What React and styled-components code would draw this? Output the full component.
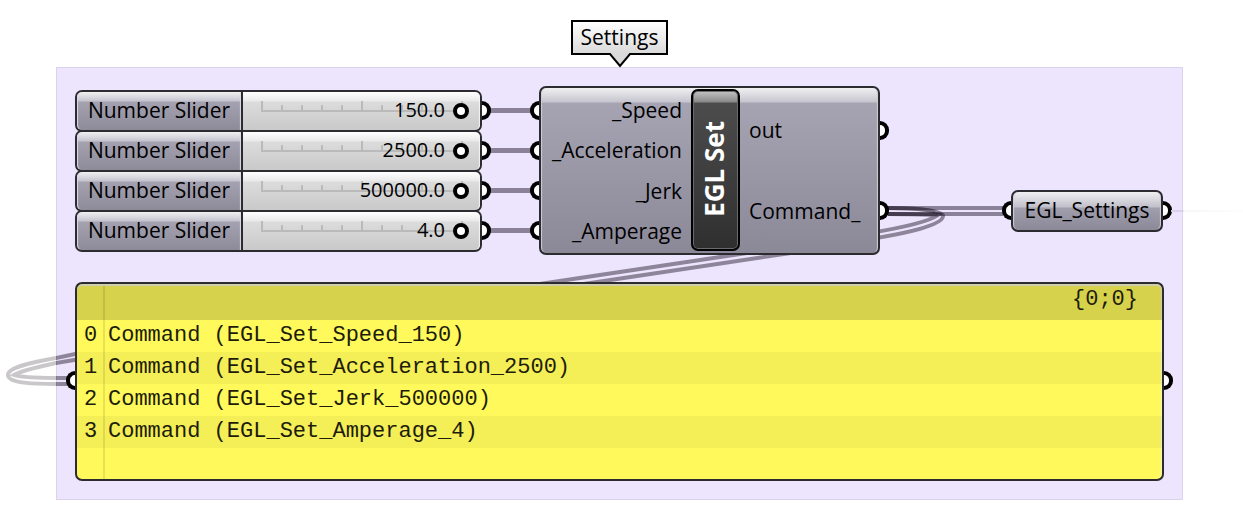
import React from "react";
import styled, { createGlobalStyle } from "styled-components";

const GlobalStyle = createGlobalStyle`
  * { box-sizing: border-box; }
  body {
    margin: 0;
    background: #ffffff;
    color: #000000;
    font-family: "Open Sans", "Noto Sans", sans-serif;
    font-size: 21px;
    line-height: 28px;
  }
`;

const Canvas = styled.main`
  display: flex;
  flex-direction: column;
  min-width: 1060px;
  padding: 20px 60px 20px 56px;
  overflow: hidden;
`;

const Tag = styled.h1`
  position: relative;
  z-index: 2;
  align-self: center;
  height: 35px;
  margin: 0 0 12px;
  padding: 1px 8px;
  border: 2px solid #000000;
  background: linear-gradient(#ffffff, #dadada);
  font-size: 21px;
  font-weight: 400;
  line-height: 28px;
`;

const Pointer = styled.svg`
  position: absolute;
  top: 31px;
  left: 50%;
  width: 22px;
  height: 15px;
  margin-left: -11px;
`;

const Group = styled.section`
  position: relative;
  display: flex;
  flex-direction: column;
  gap: 27px;
  padding: 18px;
  border: 1px solid #dad3ee;
  background: #ede5fe;
`;

const LoopWires = styled.svg`
  position: absolute;
  top: -1px;
  left: -57px;
  width: 1000px;
  height: 434px;
  pointer-events: none;
`;

const Flow = styled.div`
  display: flex;
  align-items: center;
`;

const Sliders = styled.div`
  flex: none;
  display: flex;
  flex-direction: column;
  width: 407px;
`;

const SliderRow = styled.div`
  position: relative;
  display: flex;
  height: 42px;
  margin-bottom: -2px;
  border: 2px solid #2c2b2f;
  border-radius: 7px;
  background: #2c2b2f;
  &:last-child { margin-bottom: 0; }
`;

const SliderLabel = styled.label`
  display: flex;
  align-items: center;
  justify-content: center;
  width: 164px;
  margin-right: 2px;
  padding-bottom: 2px;
  border-radius: 5px 0 0 5px;
  background: linear-gradient(#f0f0f2 0, #c5c4cf 9px, #a4a2b1 10px, #8d8b99 100%);
  box-shadow: inset 2px 0 1px -1px #dddce4, inset -2px 0 1px -1px #dddce4;
`;

const SliderBody = styled.div`
  flex: 1;
  display: grid;
  align-items: center;
  padding: 0 11px;
  border-radius: 0 5px 5px 0;
  background: linear-gradient(#ffffff 0, #e9e9e9 9px, #dcdcdc 10px, #c9c9c9 100%);
  box-shadow: inset -2px 0 1px -1px #f4f4f4;
`;

const Range = styled.input`
  grid-area: 1 / 1;
  appearance: none;
  width: 100%;
  height: 20px;
  margin: 0;
  background:
    linear-gradient(#bababa, #bababa) 7px 9px / 202px 2px no-repeat,
    repeating-linear-gradient(90deg, #bababa 0 2px, transparent 2px 100px) 7px 0 / 202px 10px no-repeat,
    repeating-linear-gradient(90deg, #bababa 0 2px, transparent 2px 20px) 7px 4px / 202px 6px no-repeat;
  &::-webkit-slider-thumb {
    appearance: none;
    width: 16px;
    height: 16px;
    border: 4px solid #000000;
    border-radius: 50%;
    background: #ffffff;
  }
`;

const Value = styled.output`
  grid-area: 1 / 1;
  z-index: 1;
  justify-self: end;
  padding: 0 24px 2px 0;
  font-size: 20px;
  pointer-events: none;
`;

const Port = styled.span`
  position: absolute;
  top: ${(p) => p.$y}px;
  ${(p) => (p.$side === "in" ? "right: 100%;" : "left: 100%;")}
  width: 9px;
  height: 19px;
  margin: 0 2px;
  border: solid #000000;
  border-width: ${(p) => (p.$side === "in" ? "4px 0 4px 4px" : "4px 4px 4px 0")};
  border-radius: ${(p) => (p.$side === "in" ? "10px 0 0 10px" : "0 10px 10px 0")};
  background: #ffffff;
`;

const ShortWires = styled.div`
  flex: none;
  display: flex;
  flex-direction: column;
  gap: 35px;
  width: 57px;
  padding: 0 8px;
`;

const Wire = styled.span`
  height: 5px;
  background: #8b8299;
`;

const Component = styled.article`
  position: relative;
  z-index: 1;
  flex: none;
  display: grid;
  grid-template-columns: 141px 49px 1fr;
  column-gap: 9px;
  width: 341px;
  height: 169px;
  border: 2px solid #2c2b2f;
  border-radius: 7px;
  background: linear-gradient(#f0f0f2 0, #c6c5cf 14px, #a6a4b3 15px, #8b8998 100%);
  box-shadow: inset 2px 0 1px -1px #cfced8, inset -2px 0 1px -1px #cfced8;
`;

const PortNames = styled.ul`
  display: flex;
  flex-direction: column;
  justify-content: space-around;
  margin: 0;
  padding: 2px 0;
  list-style: none;
  text-align: ${(p) => p.$align};
`;

const Core = styled.h2`
  display: flex;
  align-items: center;
  justify-content: center;
  height: 162px;
  margin: 1px 0 0;
  padding: 0 4px 2px 0;
  border: 2px solid #000000;
  border-radius: 7px;
  background: linear-gradient(#c4c4c4 0, #888888 11px, #4c4c4c 12px, #2f2f2f 100%);
  box-shadow: inset 0 0 0 1px #6a6a6a;
  color: #ffffff;
  font-size: 26px;
  line-height: 32px;
`;

const Vertical = styled.span`
  writing-mode: vertical-rl;
  transform: rotate(180deg);
`;

const Link = styled.div`
  flex: 1;
  align-self: flex-end;
  height: 10px;
  margin: 0 8px 39px;
  border: solid #8b8299;
  border-width: 4px 0;
`;

const Param = styled.div`
  position: relative;
  flex: none;
  align-self: flex-end;
  width: 152px;
  height: 42px;
  margin: 0 1px 23px 0;
  padding: 4px 0;
  border: 2px solid #2c2b2f;
  border-radius: 7px;
  background: linear-gradient(#f0f0f2 0, #c0bfca 15px, #a19fae 16px, #8b8998 100%);
  box-shadow: inset 2px 0 1px -1px #cfced8, inset -2px 0 1px -1px #cfced8;
  text-align: center;
`;

const FadingWire = styled.span`
  position: absolute;
  top: 18px;
  left: calc(100% + 10px);
  width: 72px;
  height: 2px;
  background: linear-gradient(90deg, #d9d1eb 12px, #f7f7f7 13px, #fdfdfd);
`;

const Panel = styled.div`
  position: relative;
  height: 199px;
  border: 2px solid #2c2b2f;
  border-radius: 7px;
  background:
    linear-gradient(#00000018, #00000018) 26px 0 / 2px 100% no-repeat,
    #fff95b;
  box-shadow: inset 0 2px 1px #f6f4cf, inset -2px 0 1px -1px #f6f4cf;
`;

const Table = styled.table`
  width: 100%;
  border-collapse: collapse;
  font-family: "Liberation Mono", monospace;
  font-size: 22px;
  line-height: 28px;
  color: #1d1c0a;
`;

const HeadRow = styled.tr`
  height: 36px;
  background: #00000028;
`;

const Path = styled.th`
  padding: 0 24px 4px 0;
  font-weight: 400;
  text-align: right;
`;

const Row = styled.tr`
  height: 32px;
  background: ${(p) => (p.$odd ? "#0000000b" : "transparent")};
`;

const Index = styled.th`
  width: 28px;
  padding: 2px 0 2px 7px;
  font-weight: 400;
  text-align: left;
`;

const Item = styled.td`
  padding: 2px 0 2px 3px;
`;

const sliders = [
  { id: "speed", value: 150, text: "150.0" },
  { id: "acceleration", value: 2500, text: "2500.0" },
  { id: "jerk", value: 500000, text: "500000.0" },
  { id: "amperage", value: 4, text: "4.0" },
];

const commands = [
  "Command (EGL_Set_Speed_150)",
  "Command (EGL_Set_Acceleration_2500)",
  "Command (EGL_Set_Jerk_500000)",
  "Command (EGL_Set_Amperage_4)",
];

function LeftLoop() {
  return (
    <>
      <path d="M80 286 L56 291 C34 295 8 300 8 308 C8 317 36 317 70 317" />
      <path d="M80 292 L56 296 C38 300 20 304 14 308 C22 311 44 311 70 311" />
    </>
  );
}

function Wires() {
  return (
    <LoopWires viewBox="0 0 1000 434" fill="none" stroke="#0c0010" strokeWidth="4" aria-hidden="true">
      <defs>
        <clipPath id="inside"><rect x="56" y="0" width="944" height="434" /></clipPath>
        <clipPath id="outside"><rect x="0" y="0" width="56" height="434" /></clipPath>
      </defs>
      <path d="M888 141 C905 141 925 142 935 145" strokeOpacity="0.2" />
      <path d="M888 147 C905 147 925 147 938 148" strokeOpacity="0.2" />
      <g strokeOpacity="0.42">
        <path d="M888 141 C915 141 943 143 943 149 C943 158 908 166 870 172" />
        <path d="M888 147 C912 147 932 147 938 148 C930 154 906 160 870 166" />
        <path d="M787 180 L533 218" />
        <path d="M831 180 L577 218" />
        <g clipPath="url(#inside)"><LeftLoop /></g>
      </g>
      <g strokeOpacity="0.22" clipPath="url(#outside)"><LeftLoop /></g>
    </LoopWires>
  );
}

export default function App() {
  return (
    <>
      <GlobalStyle />
      <Canvas>
        <Tag>
          Settings
          <Pointer viewBox="0 0 22 15" aria-hidden="true">
            <path d="M1 0 L11 13 L21 0 Z" fill="#dadada" />
            <path d="M0 1 H1 L11 13 L21 1 H22" fill="none" stroke="#000000" strokeWidth="2" />
          </Pointer>
        </Tag>
        <Group>
          <Wires />
          <Flow>
            <Sliders>
              {sliders.map((s) => (
                <SliderRow key={s.id}>
                  <SliderLabel htmlFor={s.id}>Number Slider</SliderLabel>
                  <SliderBody>
                    <Range id={s.id} type="range" min="0" max={s.value} defaultValue={s.value} />
                    <Value htmlFor={s.id}>{s.text}</Value>
                  </SliderBody>
                  <Port $side="out" $y={9} />
                </SliderRow>
              ))}
            </Sliders>
            <ShortWires>
              {sliders.map((s) => (
                <Wire key={s.id} />
              ))}
            </ShortWires>
            <Component>
              {[13, 53, 93, 133].map((y) => (
                <Port key={y} $side="in" $y={y} />
              ))}
              <PortNames $align="right">
                <li>_Speed</li>
                <li>_Acceleration</li>
                <li>_Jerk</li>
                <li>_Amperage</li>
              </PortNames>
              <Core><Vertical>EGL Set</Vertical></Core>
              <PortNames $align="left">
                <li>out</li>
                <li>Command_</li>
              </PortNames>
              {[33, 113].map((y) => (
                <Port key={y} $side="out" $y={y} />
              ))}
            </Component>
            <Link />
            <Param>
              <Port $side="in" $y={9} />
              EGL_Settings
              <Port $side="out" $y={9} />
              <FadingWire />
            </Param>
          </Flow>
          <Panel>
            <Port $side="in" $y={87} />
            <Table>
              <thead>
                <HeadRow>
                  <Path colSpan={2}>{"{0;0}"}</Path>
                </HeadRow>
              </thead>
              <tbody>
                {commands.map((text, i) => (
                  <Row key={text} $odd={i % 2 === 1}>
                    <Index scope="row">{i}</Index>
                    <Item>{text}</Item>
                  </Row>
                ))}
              </tbody>
            </Table>
            <Port $side="out" $y={87} />
          </Panel>
        </Group>
      </Canvas>
    </>
  );
}
